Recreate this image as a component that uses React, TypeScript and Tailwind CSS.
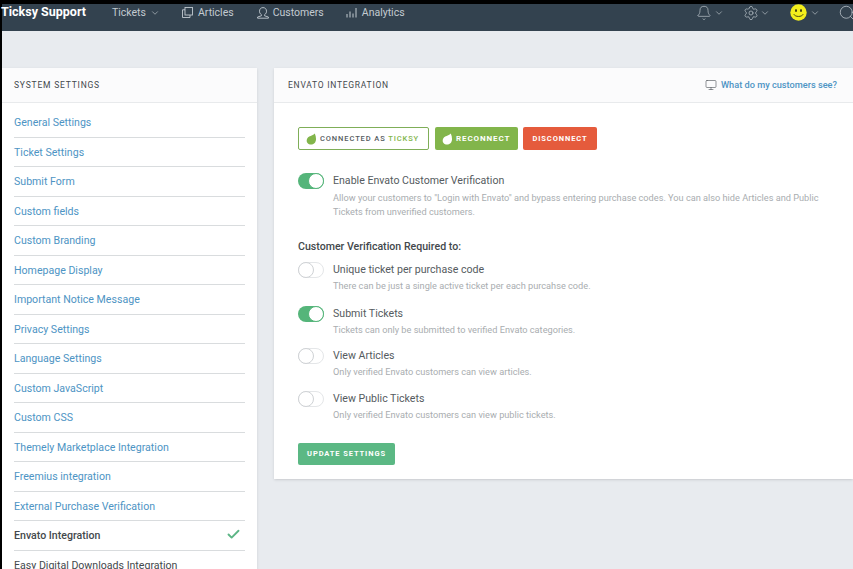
import { Bell, ChevronDown, Check, Monitor, Search, Settings } from "lucide-react";
import type { ReactNode } from "react";

const menuItems = [
  "General Settings",
  "Ticket Settings",
  "Submit Form",
  "Custom fields",
  "Custom Branding",
  "Homepage Display",
  "Important Notice Message",
  "Privacy Settings",
  "Language Settings",
  "Custom JavaScript",
  "Custom CSS",
  "Themely Marketplace Integration",
  "Freemius integration",
  "External Purchase Verification",
];

const Leaf = ({ color }: { color: string }) => (
  <svg width="11" height="12" viewBox="0 0 11 12" className="shrink-0">
    <path d="M8.8 0.5C10.4 4.5 10.6 8 8.4 10.2C6.6 12 3.2 12 1.5 10C-0.2 7.8 0.9 5 3.2 3.6C5 2.5 7.6 2.2 8.8 0.5Z" fill={color} />
  </svg>
);

const Toggle = ({ on }: { on: boolean }) => (
  <div
    className={`flex h-4 w-[26px] shrink-0 items-center rounded-full ${
      on ? "justify-end bg-[#55b57a]" : "justify-start border border-[#e4e6e8] bg-white"
    }`}
  >
    <div className={`h-4 w-4 rounded-full bg-white ${on ? "border border-[#55b57a]" : "border border-[#cfd2d5] -ml-px"}`} />
  </div>
);

const Setting = ({ on, title, desc, className }: { on: boolean; title: string; desc: ReactNode; className?: string }) => (
  <div className={`flex gap-[9px] ${className ?? ""}`}>
    <Toggle on={on} />
    <div className="pt-px">
      <div className="text-[10.6px] leading-[14px] text-[#555b60]">{title}</div>
      <div className="mt-[2px] text-[9.2px] leading-[14px] whitespace-nowrap text-[#a9adb0]">{desc}</div>
    </div>
  </div>
);

const App = () => {
  return (
    <div className="h-[569px] w-[853px] overflow-hidden bg-black pt-1 pl-[2px] font-['Roboto',sans-serif]">
      <div className="h-full bg-[#e8ebef]">
        <nav className="flex h-[27px] items-center bg-[#33424f] pb-[10px] text-[10.5px] text-[#c3cbd1]">
          <span className="-ml-px w-[111px] shrink-0 text-[12.5px] font-bold text-white">Ticksy Support</span>
          <span className="flex items-center">
            Tickets <ChevronDown size={10} className="ml-1" strokeWidth={1.5} />
          </span>
          <span className="ml-[22px] flex items-center gap-[5px]">
            <svg width="11" height="11" viewBox="0 0 11 11" fill="none" stroke="currentColor" strokeWidth="0.9">
              <rect x="3" y="0.5" width="7.5" height="7.5" />
              <path d="M3 2.8H0.5V10.5H8V8" />
            </svg>
            Articles
          </span>
          <span className="ml-[23px] flex items-center gap-[4px]">
            <svg width="12" height="12" viewBox="0 0 12 12" fill="none" stroke="currentColor" strokeWidth="0.9">
              <path d="M4.4 7.6C2.9 6.8 2.5 5.4 2.5 4.2C2.5 2 4 0.6 6 0.6C8 0.6 9.5 2 9.5 4.2C9.5 5.4 9.1 6.8 7.6 7.6V8.8L11.4 10V11.2H0.6V10L4.4 8.8Z" />
            </svg>
            Customers
          </span>
          <span className="ml-[22px] flex items-center gap-[5px]">
            <svg width="11" height="11" viewBox="0 0 11 11" stroke="currentColor" strokeWidth="1">
              <path d="M1 10.5V7M4 10.5V4.5M7 10.5V6.5M10 10.5V1" />
            </svg>
            Analytics
          </span>
          <div className="ml-auto flex items-center">
            <Bell size={16} strokeWidth={1} />
            <ChevronDown size={10} strokeWidth={1.5} className="ml-[2px]" />
            <Settings size={16} strokeWidth={1} className="ml-[18.5px]" />
            <ChevronDown size={10} strokeWidth={1.5} className="ml-[1.5px]" />
            <svg width="17" height="17" viewBox="0 0 17 17" className="ml-[20px]">
              <circle cx="8.5" cy="8.5" r="8.2" fill="#f3ee1c" />
              <ellipse cx="6" cy="6.5" rx="1" ry="1.5" fill="#3a3a10" />
              <ellipse cx="11" cy="6.5" rx="1" ry="1.5" fill="#3a3a10" />
              <path d="M3.8 10.2C5.2 13.2 11.8 13.2 13.2 10.2" stroke="#3a3a10" strokeWidth="0.9" fill="none" />
            </svg>
            <ChevronDown size={10} strokeWidth={1.5} className="ml-[3px]" />
            <Search size={18} strokeWidth={1} className="ml-[18px] -mr-[3px] shrink-0" />
          </div>
        </nav>

        <div className="flex items-start gap-[17px] pt-[37px]">
          <aside className="w-[255px] shrink-0 bg-white shadow-sm">
            <div className="flex h-[35px] items-center border-b border-[#e8eaec] bg-[#fbfbfc] px-3 text-[8.5px] tracking-[0.8px] text-[#43484c]">
              SYSTEM SETTINGS
            </div>
            <ul className="px-3 pt-[5px] text-[10.6px]">
              {menuItems.map((item) => (
                <li key={item} className="flex h-[29.5px] items-center border-b border-[#d9dcde] pt-[2px] text-[#4d94c4]">
                  {item}
                </li>
              ))}
              <li className="flex h-[29.5px] items-center justify-between border-b border-[#d9dcde] pt-[2px] font-medium text-[#43484c]">
                Envato Integration
                <Check size={15} strokeWidth={3} className="mr-[4px] mb-[3px] text-[#5cb585]" />
              </li>
              <li className="flex h-[29.5px] items-center pt-[2px] text-[#43484c]">Easy Digital Downloads Integration</li>
            </ul>
          </aside>

          <main className="h-[411px] flex-1 bg-white shadow-sm">
            <div className="flex h-[35px] items-center justify-between border-b border-[#e8eaec] bg-[#fbfbfc] pr-[16px] pl-[14px]">
              <span className="text-[8.5px] tracking-[0.75px] text-[#43484c]">ENVATO INTEGRATION</span>
              <span className="flex items-center gap-[4px] text-[9.2px] font-medium text-[#4d94c4]">
                <Monitor size={12} strokeWidth={1.2} className="text-[#4a4f54]" /> What do my customers see?
              </span>
            </div>

            <div className="px-6 pt-[24px]">
              <div className="flex gap-[6px] text-[7.5px] tracking-[0.9px]">
                <div className="flex h-[23px] w-[131px] items-center gap-[3px] rounded-[2px] border border-[#7fae58] pl-[7px] font-medium text-[#555b60]">
                  <Leaf color="#82b54b" />
                  <span>
                    CONNECTED AS <span className="text-[#82b54b]">TICKSY</span>
                  </span>
                </div>
                <div className="flex h-[23px] w-[83px] items-center gap-[3px] rounded-[2px] bg-[#82b54b] pl-[7px] text-[8px] font-bold text-white">
                  <Leaf color="#ffffff" />
                  RECONNECT
                </div>
                <div className="-ml-px flex h-[23px] w-[74px] items-center justify-center rounded-[2px] bg-[#e55b3c] font-bold text-white">
                  DISCONNECT
                </div>
              </div>

              <Setting
                on
                className="mt-[23px]"
                title="Enable Envato Customer Verification"
                desc={
                  <div className="pt-px">
                    Allow your customers to "Login with Envato" and bypass entering purchase codes. You can also hide Articles and Public
                    <br />
                    Tickets from unverified customers.
                  </div>
                }
              />

              <div className="mt-[21px] text-[10.6px] leading-[14px] font-medium text-[#43484c]">Customer Verification Required to:</div>

              <Setting
                on={false}
                className="mt-[8px]"
                title="Unique ticket per purchase code"
                desc="There can be just a single active ticket per each purcahse code."
              />
              <Setting
                on
                className="mt-[13px]"
                title="Submit Tickets"
                desc="Tickets can only be submitted to verified Envato categories."
              />
              <Setting
                on={false}
                className="mt-[11px]"
                title="View Articles"
                desc="Only verified Envato customers can view articles."
              />
              <Setting
                on={false}
                className="mt-[12px]"
                title="View Public Tickets"
                desc="Only verified Envato customers can view public tickets."
              />

              <button className="mt-[21px] h-[22px] w-[97px] rounded-[2px] bg-[#5bb884] text-[7.5px] font-bold tracking-[0.9px] text-white">
                UPDATE SETTINGS
              </button>
            </div>
          </main>
        </div>
      </div>
    </div>
  );
};

export default App;
